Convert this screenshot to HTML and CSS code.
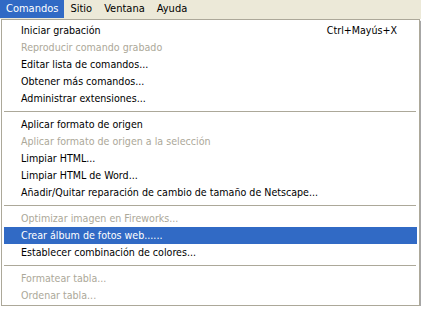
FILE: index.html
```html
<!DOCTYPE html>
<html>
<head>
    <title>Comandos</title>
    <link rel="stylesheet" href="styles.css">
</head>
<body>
    <div class="menubar">
        <span class="menubar-item active">Comandos</span>
        <span class="menubar-item">Sitio</span>
        <span class="menubar-item">Ventana</span>
        <span class="menubar-item">Ayuda</span>
    </div>

    <div class="menu">
        <div class="item"><span>Iniciar grabación</span><span class="shortcut">Ctrl+Mayús+X</span></div>
        <div class="item disabled"><span>Reproducir comando grabado</span></div>
        <div class="item"><span>Editar lista de comandos...</span></div>
        <div class="item"><span>Obtener más comandos...</span></div>
        <div class="item"><span>Administrar extensiones...</span></div>
        <div class="separator"></div>
        <div class="item"><span>Aplicar formato de origen</span></div>
        <div class="item disabled"><span>Aplicar formato de origen a la selección</span></div>
        <div class="item"><span>Limpiar HTML...</span></div>
        <div class="item"><span>Limpiar HTML de Word...</span></div>
        <div class="item"><span>Añadir/Quitar reparación de cambio de tamaño de Netscape...</span></div>
        <div class="separator"></div>
        <div class="item disabled"><span>Optimizar imagen en Fireworks...</span></div>
        <div class="item selected"><span>Crear álbum de fotos web......</span></div>
        <div class="item"><span>Establecer combinación de colores...</span></div>
        <div class="separator"></div>
        <div class="item disabled"><span>Formatear tabla...</span></div>
        <div class="item disabled"><span>Ordenar tabla...</span></div>
    </div>
</body>
</html>
```

FILE: styles.css
```css
body {
    font-family: "DejaVu Sans Condensed", "DejaVu Sans", sans-serif;
    font-size: 11px;
    margin: 0;
    padding: 0;
    background-color: #fff;
    color: #000;
}

.menubar {
    display: flex;
    height: 19px;
    background-color: #ece9d8;
}

.menubar-item {
    padding: 0 6px;
    line-height: 18px;
    height: 18px;
}

.menubar-item.active {
    background-color: #316ac5;
    color: #fff;
}

.menu {
    width: 413px;
    margin-left: 1px;
    padding: 2px 2px 1px 2px;
    font-size: 10.6px;
    background-color: #fff;
    border: 1px solid #aca899;
    box-shadow: 2px 2px 1px rgba(0, 0, 0, 0.35);
}

.item {
    display: flex;
    justify-content: space-between;
    height: 17px;
    line-height: 17px;
    padding: 0 20px 0 17px;
    white-space: nowrap;
}

.item.disabled {
    color: #aca899;
}

.item.selected {
    background-color: #316ac5;
    color: #fff;
}

.separator {
    height: 1px;
    margin: 4px 1px 4px 0;
    background-color: #aca899;
}
```
